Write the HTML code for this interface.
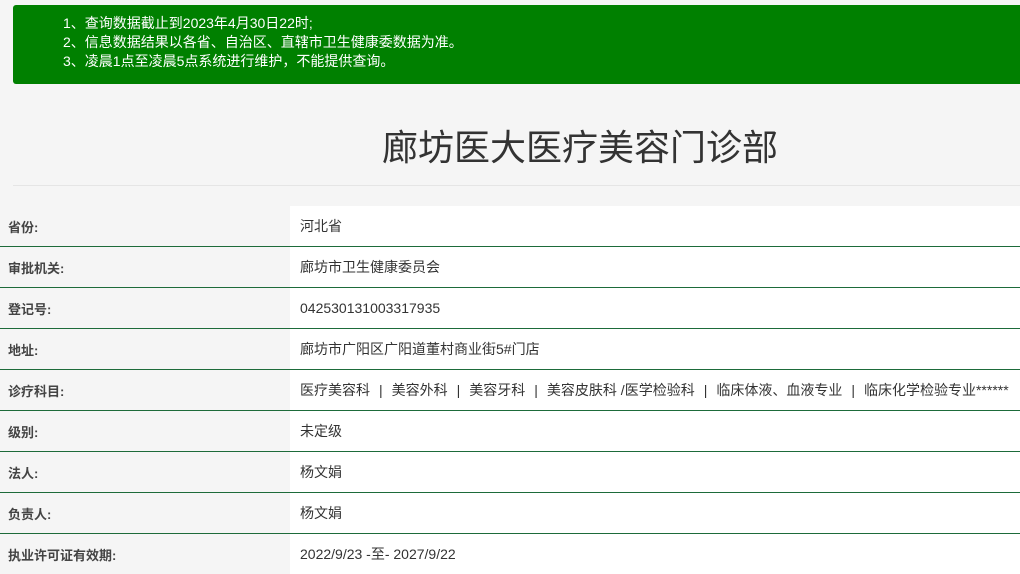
<!DOCTYPE html>
<html><head><meta charset="utf-8"><style>
body{margin:0;width:1020px;height:570px;overflow:hidden;background:#f5f5f5;font-family:"Liberation Sans","Noto Sans CJK SC",sans-serif;color:#333}
.notice{position:absolute;left:13px;top:5px;width:1007px;height:79px;background:#008000;border-radius:3px 0 0 3px;color:#fff;font-size:14px;line-height:19px;box-sizing:border-box;padding:9px 0 0 50px}
h1{position:absolute;left:0;width:1160px;top:124px;margin:0;text-align:center;font-weight:normal;font-size:36px;color:#333;line-height:48px}
.hr{position:absolute;left:13px;right:0;top:185px;border-top:1px solid #e5e5e5}
table{position:absolute;left:0;top:206px;width:1020px;border-collapse:collapse;font-size:14px}
td{height:40px;padding:0;border-bottom:1px solid #1d6b3a}
td.l{width:290px;padding-left:8px;box-sizing:border-box;font-weight:bold;color:#444;background:#f5f5f5;font-size:13px}
td.v{background:#fff;padding-left:10px;color:#333;white-space:nowrap}
.s{padding:0 9px}
</style></head><body>
<div class="notice">1、查询数据截止到2023年4月30日22时;<br>2、信息数据结果以各省、自治区、直辖市卫生健康委数据为准。<br>3、凌晨1点至凌晨5点系统进行维护，不能提供查询。</div>
<h1>廊坊医大医疗美容门诊部</h1>
<div class="hr"></div>
<table>
<tr><td class="l">省份:</td><td class="v">河北省</td></tr>
<tr><td class="l">审批机关:</td><td class="v">廊坊市卫生健康委员会</td></tr>
<tr><td class="l">登记号:</td><td class="v">042530131003317935</td></tr>
<tr><td class="l">地址:</td><td class="v">廊坊市广阳区广阳道董村商业街5#门店</td></tr>
<tr><td class="l">诊疗科目:</td><td class="v">医疗美容科<span class="s">|</span>美容外科<span class="s">|</span>美容牙科<span class="s">|</span>美容皮肤科 /医学检验科<span class="s">|</span>临床体液、血液专业<span class="s">|</span>临床化学检验专业******</td></tr>
<tr><td class="l">级别:</td><td class="v">未定级</td></tr>
<tr><td class="l">法人:</td><td class="v">杨文娟</td></tr>
<tr><td class="l">负责人:</td><td class="v">杨文娟</td></tr>
<tr><td class="l" style="border:0">执业许可证有效期:</td><td class="v" style="border:0">2022/9/23 -至- 2027/9/22</td></tr>
</table>
</body></html>
